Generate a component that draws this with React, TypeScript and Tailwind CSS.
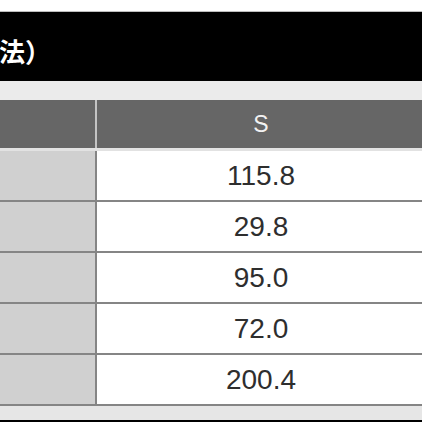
const rows = ['115.8', '29.8', '95.0', '72.0', '200.4'];

export default function App() {
  return (
    <div className="w-[422px] h-[422px] overflow-hidden bg-white flex flex-col" style={{ fontFamily: '"Liberation Sans", Arial, sans-serif' }}>
      <div className="h-[12px] shrink-0 bg-white border-b border-[#bdbdbd]" />
      <div className="h-[69px] shrink-0 bg-black flex items-center pt-[8px]">
        <span
          className="text-white font-bold text-[26px] leading-none -ml-[1px]"
          style={{ fontFamily: '"Noto Sans CJK JP", "Noto Sans CJK SC", sans-serif' }}
        >
          法）
        </span>
      </div>
      <div className="h-[19px] shrink-0 bg-[#ebebeb]" />
      <div className="h-[48px] shrink-0 flex bg-[#666666]">
        <div className="w-[95px] shrink-0" />
        <div className="w-[2px] shrink-0 bg-[#c4c4c4]" />
        <div className="w-[328px] shrink-0 flex items-center justify-center text-[23px] text-[#f2f2f2]">S</div>
      </div>
      <div className="h-[3px] shrink-0 bg-[#e2e2e2]" />
      {rows.map((v) => (
        <div key={v} className="h-[51px] shrink-0 flex border-b-2 border-[#858585]">
          <div className="w-[95px] shrink-0 bg-[#d0d0d0]" />
          <div className="w-[2px] shrink-0 bg-[#858585]" />
          <div className="w-[328px] shrink-0 flex items-center justify-center text-[28px] text-[#2e2e2e]">{v}</div>
        </div>
      ))}
      <div className="h-[14px] shrink-0 bg-[#e6e6e6]" />
      <div className="h-[2px] shrink-0 bg-black" />
    </div>
  );
}
